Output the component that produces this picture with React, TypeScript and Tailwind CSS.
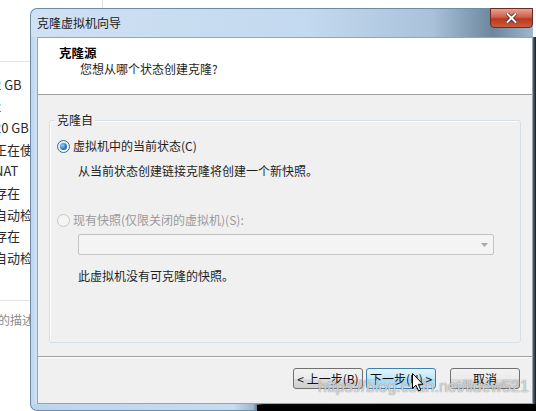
import React from "react";

const cjk = "font-['Noto_Sans_CJK_SC','Noto_Sans',sans-serif]";

// background list on the left, mostly hidden under the dialog
const bgRows = ["2 GB", "2", "20 GB", "正在使用", "NAT", "存在", "自动检测", "存在", "自动检测"];

const Radio = ({ checked, disabled }: { checked?: boolean; disabled?: boolean }) => (
  <span
    className={`flex h-[13px] w-[13px] shrink-0 items-center justify-center rounded-full border ${
      disabled
        ? "border-[#c8c8c8] bg-[#f4f4f4]"
        : "border-[#3c6a92] bg-[linear-gradient(135deg,#dfe6ec,#ffffff)]"
    }`}
  >
    {checked && (
      <span className="h-[7px] w-[7px] rounded-full bg-[radial-gradient(circle_at_35%_35%,#8fd0f7,#2a7cc4_55%,#144f8a)]" />
    )}
  </span>
);

const Button = ({ children, active }: { children: React.ReactNode; active?: boolean }) => (
  <div
    className={`flex h-[21px] w-[70px] items-center justify-center rounded-[3px] border text-[12px] leading-none ${
      active
        ? "border-[#3c7fb1] bg-[linear-gradient(#e8f5fc,#bee6fd_50%,#a7d9f5_51%,#bfe3f7)] text-[#111]"
        : "border-[#707070] bg-[linear-gradient(#f2f2f2,#ebebeb_50%,#dddddd_51%,#cfcfcf)] text-[#111]"
    }`}
  >
    {children}
  </div>
);

export default function App() {
  return (
    <div className={`relative h-[411px] w-[536px] overflow-hidden bg-white ${cjk}`}>
      {/* desktop behind the dialog */}
      <div className="flex h-full">
        <div className="flex w-[30px] flex-col">
          <div className="h-[62px] border-b border-[#e3e3e3]" />
          <div className="flex flex-col pt-[12px] text-[13px] leading-[21.6px] text-[#2a2a2a]">
            {bgRows.map((r, i) => (
              <span key={i} className="ml-[-6px] whitespace-nowrap">
                {r}
              </span>
            ))}
          </div>
          <div className="mt-[32px] border-b border-[#e3e3e3]" />
          <span className="ml-[-2px] mt-[10px] whitespace-nowrap text-[12px] text-[#8a8a8a]">的描述</span>
        </div>
        <div className="ml-[72px] h-full w-px bg-[#e0e0e0]" />
      </div>

      {/* dialog window */}
      <div className="absolute left-[30px] top-[8px] flex h-[403px] w-[506px] flex-col">
        {/* title bar */}
        <div className="mr-[3px] flex h-[29px] items-start justify-between rounded-tl-[7px] border-l border-t border-[#6d8aa6] bg-[linear-gradient(90deg,#cfe1f3_0%,#c3d9ef_55%,#a9c2da_80%,#6c869e_92%,#9fb7cd_100%)]">
          <span className="pl-[6px] pt-[6px] text-[12px] leading-[16px] text-[#1b1b1b]">克隆虚拟机向导</span>
          <div className="mt-[-1px] flex h-[20px] w-[43px] items-center justify-center rounded-b-[4px] border border-[#6b2a22] bg-[linear-gradient(#e8a194,#d0604c_45%,#b83820_55%,#cf5a3c)]">
            <svg width="11" height="10" viewBox="0 0 11 10">
              <path d="M1.5 1 L9.5 9 M9.5 1 L1.5 9" stroke="#3a1a14" strokeWidth="3.4" strokeLinecap="square" />
              <path d="M1.5 1 L9.5 9 M9.5 1 L1.5 9" stroke="#ffffff" strokeWidth="2" strokeLinecap="square" />
            </svg>
          </div>
        </div>

        {/* frame + client */}
        <div className="flex flex-1">
          <div className="w-[7px] border-l border-[#6d8aa6] bg-[linear-gradient(90deg,#bcd5ee,#cfe2f4)]" />
          <div className="flex w-[496px] flex-col border border-[#8ea7bf] bg-[#f0f0f0]">
            {/* header */}
            <div className="flex h-[57px] flex-col border-b border-[#a0a0a0] bg-white pt-[7px]">
              <span className="pl-[21px] text-[12.5px] font-bold leading-[16px] text-black">克隆源</span>
              <span className="pl-[42px] text-[12px] leading-[16px] text-[#1e1e1e]">您想从哪个状态创建克隆?</span>
            </div>

            {/* body */}
            <div className="flex h-[261px] flex-col px-[11px] pt-[25px]">
              <div className="relative flex h-[223px] flex-col rounded-[3px] border border-[#d5dfe5] pl-[7px] pr-[26px] pt-[17px] shadow-[inset_1px_1px_0_#ffffff]">
                <span className="absolute left-[5px] top-[-9px] bg-[#f0f0f0] px-[2px] text-[12px] leading-[16px] text-[#1e1e1e]">
                  克隆自
                </span>
                <div className="flex h-[16px] items-center gap-[3px]">
                  <Radio checked />
                  <span className="text-[12px] leading-[16px] text-[#1e1e1e]">虚拟机中的当前状态(C)</span>
                </div>
                <span className="mt-[9px] pl-[21px] text-[12px] leading-[16px] text-[#1e1e1e]">
                  从当前状态创建链接克隆将创建一个新快照。
                </span>
                <div className="mt-[33px] flex h-[16px] items-center gap-[3px]">
                  <Radio disabled />
                  <span className="text-[12px] leading-[16px] text-[#9a9a9a]">现有快照(仅限关闭的虚拟机)(S):</span>
                </div>
                <div className="ml-[21px] mt-[6px] flex h-[21px] items-center justify-end rounded-[2px] border border-[#c4c4c4] bg-[#f4f4f4] pr-[5px]">
                  <svg width="7" height="4" viewBox="0 0 7 4">
                    <path d="M0 0 H7 L3.5 4 Z" fill="#a8a8a8" />
                  </svg>
                </div>
                <span className="mt-[13px] pl-[21px] text-[12px] leading-[16px] text-[#1e1e1e]">
                  此虚拟机没有可克隆的快照。
                </span>
              </div>
            </div>

            {/* separator */}
            <div className="border-t border-[#a0a0a0] bg-white pt-px" />

            {/* footer */}
            <div className="flex flex-1 items-start justify-end gap-[14px] pr-[12px] pt-[10px]">
              <div className="flex gap-[3px]">
                <Button>&lt; 上一步(B)</Button>
                <Button active>下一步(N) &gt;</Button>
              </div>
              <Button>取消</Button>
            </div>
          </div>
          <div className="w-[3px] bg-[linear-gradient(90deg,#5a6470,#1c1c1c)]" />
        </div>

        {/* bottom frame */}
        <div className="h-[7px] rounded-bl-[7px] border-b border-l border-[#6d8aa6] bg-[linear-gradient(90deg,#bcd5ee_0%,#c6dcf1_40%,#9fb6cc_44%,#0c0c0c_46%,#000000_100%)]" />
      </div>

      {/* dark shadow at bottom right */}
      <div className="absolute bottom-0 left-[257px] right-0 h-[6px] bg-black" />

      {/* watermark */}
      <span className="absolute left-[318px] top-[377px] whitespace-nowrap font-['Liberation_Sans',sans-serif] text-[16px] leading-[20px] text-[rgba(240,240,240,0.8)] [text-shadow:0_0_1px_rgba(80,80,80,0.9)]">
        https://blog.csdn.net/lidew521
      </span>

      {/* mouse cursor */}
      <svg className="absolute left-[412px] top-[373px]" width="12" height="19" viewBox="0 0 12 19">
        <path d="M0.5 0.5 V15.5 L4 12.2 L6.6 18 L8.8 17 L6.3 11.3 L11 11.3 Z" fill="#ffffff" stroke="#000000" strokeWidth="1" strokeLinejoin="round" />
      </svg>
    </div>
  );
}
